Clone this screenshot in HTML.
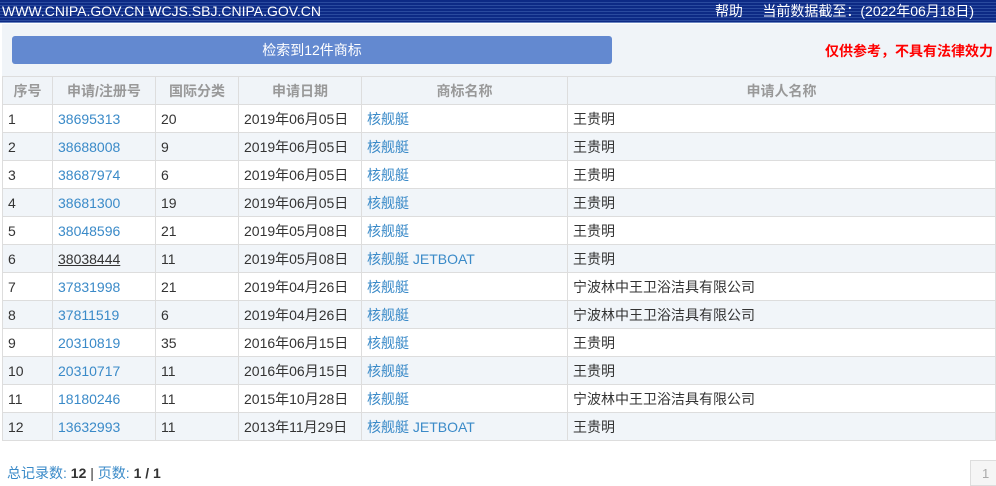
<!DOCTYPE html>
<html><head><meta charset="utf-8"><style>
*{margin:0;padding:0;box-sizing:border-box}
body{width:996px;height:484px;overflow:hidden;background:#fff;font-family:"Liberation Sans","Noto Sans CJK SC",sans-serif;font-size:14px;color:#333;position:relative}
#top{position:absolute;left:0;top:0;width:996px;height:23px;background:repeating-linear-gradient(#0d2a85 0 2px,#2a4a9e 2px 3px);color:#fff;font-size:14px;line-height:22px;border-bottom:1px solid #6b86c0}
#top .l{position:absolute;left:2px;top:0}
#top .r{position:absolute;right:22px;top:0}
#band{position:absolute;left:2px;top:24px;width:994px;height:52px;background:#f0f4f8}
#btn{position:absolute;left:12px;top:36px;width:600px;height:28px;background:#6389d0;border-radius:3px;color:#fff;text-align:center;line-height:28px;font-size:14px}
#warn{position:absolute;right:3px;top:41px;color:#f00;font-weight:bold;font-size:14px}
table{position:absolute;left:2px;top:76px;width:994px;border-collapse:collapse}
td,th{border:1px solid #ddd;height:28px;padding:0 5px;font-size:14px;text-align:left;white-space:nowrap}
th{color:#999;font-weight:bold;text-align:center;background:#f0f4f8}
tr:nth-child(odd) td{background:#f1f5f9}
a{color:#3a8ac8;text-decoration:none}
#foot{position:absolute;left:7px;top:463px;font-size:14px;color:#3a8ac8}
#foot b{color:#333}
#pg{position:absolute;left:970px;top:460px;width:30px;height:26px;border:1px solid #ddd;background:#f5f5f5;color:#aaa;padding:5px 0 0 11px;font-size:13px}
</style></head><body>
<div id="top"><span class="l">WWW.CNIPA.GOV.CN WCJS.SBJ.CNIPA.GOV.CN</span><span class="r">帮助&nbsp;&nbsp;&nbsp;&nbsp;&nbsp;当前数据截至：(2022年06月18日)</span></div>
<div id="band"></div>
<div id="btn">检索到12件商标</div>
<div id="warn">仅供参考，不具有法律效力</div>
<table>
<colgroup><col style="width:50px"><col style="width:103px"><col style="width:83px"><col style="width:123px"><col style="width:206px"><col></colgroup>
<tr><th>序号</th><th>申请/注册号</th><th>国际分类</th><th>申请日期</th><th>商标名称</th><th>申请人名称</th></tr>
<tr><td>1</td><td><a>38695313</a></td><td>20</td><td>2019年06月05日</td><td><a>核舰艇</a></td><td>王贵明</td></tr>
<tr><td>2</td><td><a>38688008</a></td><td>9</td><td>2019年06月05日</td><td><a>核舰艇</a></td><td>王贵明</td></tr>
<tr><td>3</td><td><a>38687974</a></td><td>6</td><td>2019年06月05日</td><td><a>核舰艇</a></td><td>王贵明</td></tr>
<tr><td>4</td><td><a>38681300</a></td><td>19</td><td>2019年06月05日</td><td><a>核舰艇</a></td><td>王贵明</td></tr>
<tr><td>5</td><td><a>38048596</a></td><td>21</td><td>2019年05月08日</td><td><a>核舰艇</a></td><td>王贵明</td></tr>
<tr><td>6</td><td><a style="color:#333;text-decoration:underline">38038444</a></td><td>11</td><td>2019年05月08日</td><td><a>核舰艇 JETBOAT</a></td><td>王贵明</td></tr>
<tr><td>7</td><td><a>37831998</a></td><td>21</td><td>2019年04月26日</td><td><a>核舰艇</a></td><td>宁波林中王卫浴洁具有限公司</td></tr>
<tr><td>8</td><td><a>37811519</a></td><td>6</td><td>2019年04月26日</td><td><a>核舰艇</a></td><td>宁波林中王卫浴洁具有限公司</td></tr>
<tr><td>9</td><td><a>20310819</a></td><td>35</td><td>2016年06月15日</td><td><a>核舰艇</a></td><td>王贵明</td></tr>
<tr><td>10</td><td><a>20310717</a></td><td>11</td><td>2016年06月15日</td><td><a>核舰艇</a></td><td>王贵明</td></tr>
<tr><td>11</td><td><a>18180246</a></td><td>11</td><td>2015年10月28日</td><td><a>核舰艇</a></td><td>宁波林中王卫浴洁具有限公司</td></tr>
<tr><td>12</td><td><a>13632993</a></td><td>11</td><td>2013年11月29日</td><td><a>核舰艇 JETBOAT</a></td><td>王贵明</td></tr>
</table>
<div id="foot">总记录数: <b>12</b> <span style="color:#333">|</span> 页数: <b>1 / 1</b></div>
<div id="pg">1</div>
</body></html>
